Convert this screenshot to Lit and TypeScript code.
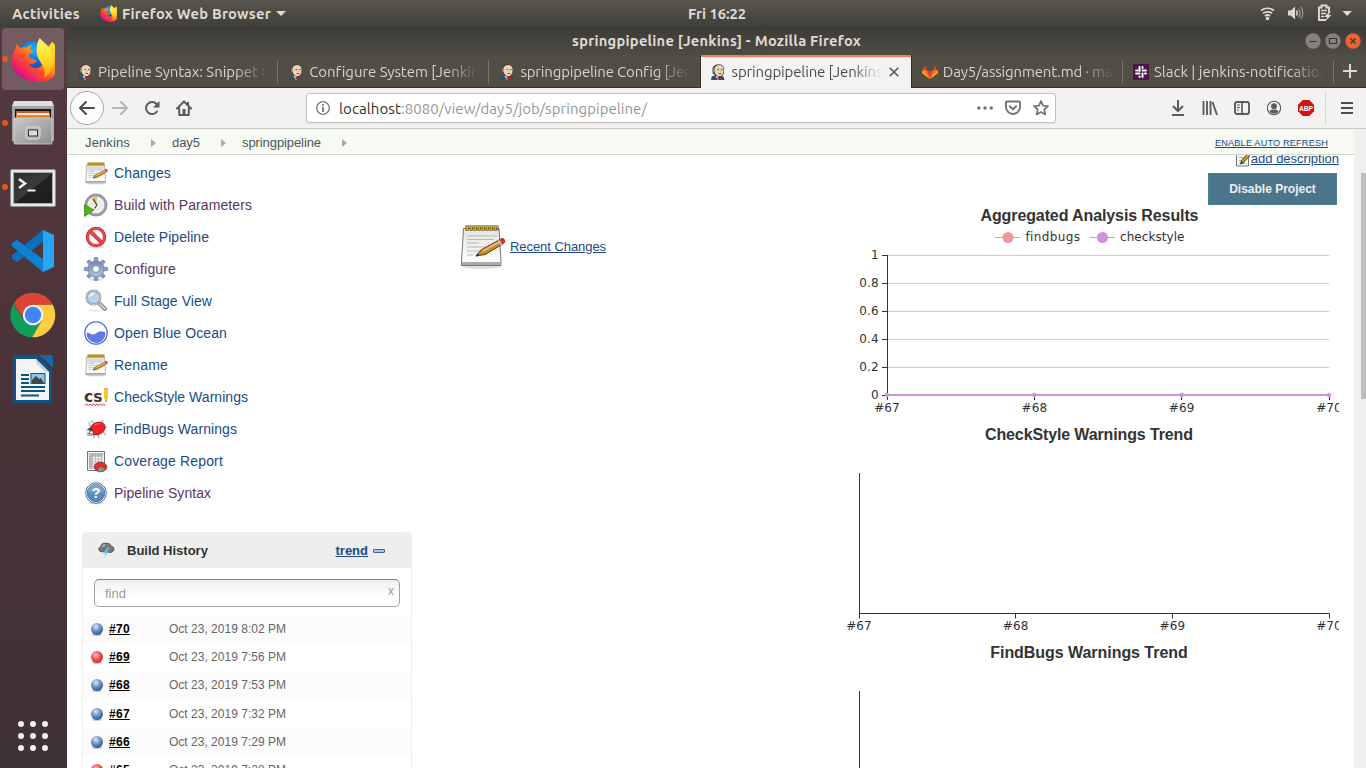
import { LitElement, html, svg, css, nothing } from "lit";
import { customElement, property } from "lit/decorators.js";

/* Sets a line of text to an exact advance width by adjusting its tracking. */
@customElement("fit-text")
class FitText extends LitElement {
  @property() text = "";
  @property({ type: Number }) w = 0;
  static styles = css`
    :host { display: inline-block; white-space: pre; }
    .t { display: inline-block; text-decoration: var(--line, none); }
  `;
  updated() {
    const el = this.renderRoot.querySelector(".t") as HTMLElement;
    el.style.letterSpacing = "0px";
    const natural = el.getBoundingClientRect().width;
    if (this.w) el.style.letterSpacing = (this.w - natural) / this.text.length + "px";
  }
  render() {
    return html`<span class="t">${this.text}</span>`;
  }
}

const firefox = (s: number) => html`<svg width=${s} height=${s} viewBox="0 0 44 46">
  <defs>
    <linearGradient id="fxBody" x1="0.85" y1="0.1" x2="0.1" y2="0.85">
      <stop offset="0" stop-color="#ffe226"/><stop offset=".35" stop-color="#ff9a1a"/>
      <stop offset=".62" stop-color="#ff4a2c"/><stop offset=".85" stop-color="#ee1e6c"/><stop offset="1" stop-color="#b5139c"/>
    </linearGradient>
    <radialGradient id="fxGlobe" cx=".5" cy=".25" r=".8">
      <stop offset="0" stop-color="#18b2f8"/><stop offset=".5" stop-color="#0a6be0"/><stop offset="1" stop-color="#3a1d7c"/>
    </radialGradient>
    <linearGradient id="fxTail" x1="0" y1="0" x2="0" y2="1">
      <stop offset="0" stop-color="#fff36a"/><stop offset=".5" stop-color="#ffdf25"/><stop offset="1" stop-color="#ff9d12"/>
    </linearGradient>
  </defs>
  <circle cx="22" cy="21" r="17.500" fill="url(#fxGlobe)"/>
  <path fill="url(#fxBody)" d="M5 6c1 2 2 3.500 4 4.500c2-1 4-1 6-.5c2-2 4-2.500 6-2.500c-1.500 1.500-2 2.500-2 4.500l3 2.500c0 1.500-3 1.500-4 2c-1 1.500 0 2.500-1 4c1 1 3 .5 5 1.500c2.500 1 3 2 4 1c-1 4-5 4-8 5c3 4 9 5 13 1c5-5 3-9 1-12l10-13c4 4 8 9 8 19c0 13-9 23-22 23C9 45 0 36 0 24C0 18 2 13 4 11z"/>
  <path fill="url(#fxTail)" d="M29 0c4 5 14 10 15 22c0 9-4 16-11 20c3-6 1-9-1-13c-2-4-5-7-6-12c-1-6 0-12 3-17z"/>
</svg>`;

const cabinet = html`<svg width="44" height="46" viewBox="0 0 44 46">
  <defs><linearGradient id="cab" x1="0" y1="0" x2="1" y2="1"><stop offset="0" stop-color="#c9c9c9"/><stop offset="1" stop-color="#8e8e8e"/></linearGradient></defs>
  <path fill="#dedede" d="M3 1h38l2 5v34H1V6z"/><path fill="#a5a5a5" d="M1 6h42v35H1z"/>
  <path fill="#191714" d="M4 9h36v10H4z"/><path fill="#d35820" d="M5 11h33l1 3v4H5z"/><path fill="#fff0df" d="M6 13h32v2H6z"/><path fill="#e7852b" d="M5 15h34v4H5z"/>
  <rect x="3" y="18" width="38" height="26" rx="1" fill="url(#cab)" stroke="#d2d2d2" stroke-width=".8"/>
  <rect x="15" y="27" width="14" height="12" rx="2.500" fill="#b5b5b5" stroke="#dcdcdc"/><rect x="17.500" y="30" width="9" height="6" fill="#ddd" stroke="#333"/>
</svg>`;

const terminal = html`<svg width="46" height="38" viewBox="0 0 46 38">
  <defs><linearGradient id="scr" x1="0" y1="0" x2="1" y2="1"><stop offset="0" stop-color="#2b2b2b"/><stop offset=".5" stop-color="#3c3c3c"/><stop offset=".51" stop-color="#222"/><stop offset="1" stop-color="#1c1c1c"/></linearGradient></defs>
  <rect x=".5" y=".5" width="45" height="37" rx="1.500" fill="#e8e8e8" stroke="#8f8f8f"/><rect x="3.500" y="3.500" width="39" height="31" fill="url(#scr)" stroke="#aaa"/>
  <path d="M9 10l6 4.500-6 4.500" fill="none" stroke="#eee" stroke-width="2.500"/><path d="M17.500 21.500h8" stroke="#eee" stroke-width="2"/>
</svg>`;

const vscode = html`<svg width="42" height="42" viewBox="0 0 42 42">
  <path fill="#0f6cb4" d="M31 0v12L5 32 0 28.500v-3z"/><path fill="#0b7fcb" d="M5 10l26 19v13L0 16v-2.500z"/>
  <path fill="#0a70b8" d="M0 25.500L31 0v11L5 32 0 28.500z"/><path fill="#0e82d0" d="M0 13l5-3 26 20v12L0 16z"/><path fill="#27a5f0" d="M31 0l11 5v32l-11 5z"/>
</svg>`;

const chrome = html`<svg width="46" height="46" viewBox="0 0 46 46">
  <path fill="#109d58" d="M3.500 11.700A22.300 22.300 0 0 0 22.600 45.300L32 27.500 13.500 27.500z"/>
  <path fill="#ffcd40" d="M42.600 12.500H23L32 28 22.300 45.300A22.300 22.300 0 0 0 42.600 12.500z"/>
  <path fill="#dc4437" d="M3.700 11.500A22.300 22.300 0 0 1 42.600 12.800H23a10 10 0 0 0-10 13z"/>
  <circle cx="23" cy="23" r="10.300" fill="#f3f3f3"/><circle cx="23" cy="23" r="8.200" fill="#4286f5"/>
</svg>`;

const writer = html`<svg width="42" height="48" viewBox="0 0 42 48">
  <path fill="#0c5589" d="M2 0h23l15 15v31q0 2-2 2H3q-2 0-2-2V1z"/><path fill="#1569a5" d="M27 0h12q2 0 2 2v11z"/>
  <path fill="#f5f5f5" d="M4 4h20l13 13v28H4z"/><path fill="#c9d3da" d="M24 4v0l13 13h-4L24 8z"/>
  <path stroke="#0c5589" stroke-width="2" d="M9 20h8M9 24h8M9 28h8M9 32h24M9 36h24M9 40.500h18"/>
  <rect x="19" y="18.500" width="14" height="10" fill="#8bc3e9" stroke="#0c5589"/><path fill="#40474b" d="M20 28v-3l4-4 3 3 2-1 3 5z"/>
</svg>`;

const butler = html`<svg width="16" height="16" viewBox="0 0 16 16">
  <path fill="#2d5069" d="M1 16l.8-3.500 3.700-1.500 5 1 3 .5 1 3.500z"/><path fill="#4a3e37" d="M2.500 4.500Q3.500.5 8.500.3q5 .2 5.700 4.200l-.4 5.500-2.300 2.500H6.500L2.500 9z"/>
  <path fill="#ecd3b4" d="M4.700 3.500Q5.700 1 8.800 1q4 0 4.700 3.500l-.3 5-2.300 2.500-2.900.3-2.700-2.500-1-2.500z"/><path fill="#8f8881" d="M3 4.500l1.700-1v4L3.400 9z"/>
  <path stroke="#6b5244" stroke-width="1" d="M7.500 5.500H9M11 5.500h1.500M8.500 9.500h2.700"/><path fill="#d9b592" d="M9.800 6h1v2h-1z"/>
  <path fill="#e8e6e2" d="M5.500 11.500l2.500 1 1 3.500H7.500z"/><path fill="#b8202b" d="M7.500 13l2 .9 2.500-.9v3L9.500 15l-2 1z"/>
</svg>`;
const gitlab = html`<svg width="16" height="16" viewBox="0 0 16 16"><path fill="#e24329" d="M3 1l2 6h6l2-6 3 8-8 6-8-6z"/><path fill="#fc6d26" d="M0 9l1-3h4l3 9zM16 9l-1-3h-4l-3 9z"/><path fill="#fca326" d="M0 9l1-3 7 9zM16 9l-1-3-7 9z"/></svg>`;
const slack = html`<svg width="16" height="16" viewBox="0 0 16 16"><path fill="#4a154b" d="M0 0h16v16H0z"/><path stroke="#fff" stroke-width="2" stroke-linecap="round" d="M6.500 3v4M3 6.500h1.500M9.500 3v1M9.500 6.500H13M9.500 9.500V13M12 9.500h1M3 9.500h3.500M6.500 12.500v.5"/></svg>`;

const notepad = (s: number) => html`<svg width=${s} height=${s} viewBox="0 0 48 48">
  <defs><linearGradient id="paper" x1="0" y1="0" x2="0" y2="1"><stop offset="0" stop-color="#e4e4e2"/><stop offset="1" stop-color="#fff"/></linearGradient></defs>
  <ellipse cx="24" cy="44.500" rx="19" ry="2.500" fill="#0002"/>
  <path fill="url(#paper)" stroke="#777" d="M5.500 6.500h35.500l2 33v4H3.500v-4z"/><path fill="#aaa" d="M4 40h39v3H4z"/>
  <path stroke="#b4b5b5" stroke-width="1.200" d="M9 14h30M9 17.500h27M9 21h12M9 25h24M9 29h17M9 33h6"/>
  <path stroke="#68540b" stroke-width="5.600" stroke-dasharray="3.200 .8" d="M7.500 6h33"/><path stroke="#e2c82e" stroke-width="5" stroke-dasharray="1.300 2.700" d="M8.500 5.800h32"/>
  <path fill="#c88a2c" stroke="#5c3c0c" stroke-width="1" d="M18 34l5-6 18-10 3 4.500-17 10z"/><path fill="#e9c077" d="M24 28.500l16-9 1 1.500-16 9z"/>
  <path fill="#e02e2a" stroke="#8a2020" stroke-width=".7" d="M41 18l3-1.700q3 0 2.800 4L44 22.500z"/><path fill="#bbb" d="M39.500 19l2-1.200 3 4.500-2 1.200z"/><path fill="#222" d="M17.500 34.500l2-3 2 1.500z"/>
</svg>`;

const buildClock = html`<svg width="24" height="24" viewBox="0 0 24 24"><circle cx="12" cy="12" r="9.800" fill="#eef0e6" stroke="#9a9ab0" stroke-width="2.300"/><circle cx="12" cy="12" r="11.100" fill="none" stroke="#6e6e84" stroke-width=".6"/><path fill="#e3bf4a" d="M12 12L8 5.500q3-2.500 5-1.500z"/><path d="M9 6l4 6-2.500 3.500" stroke="#444" stroke-width="1.200" fill="none"/><path stroke="#999" d="M12 3v1M21 12h-1M12 21v-1"/><path fill="#50b518" stroke="#2d7e10" stroke-width=".7" d="M.5 11.500l9.500 5.500-9.500 6.500z"/></svg>`;
const stop = html`<svg width="24" height="24" viewBox="0 0 24 24"><ellipse cx="12" cy="22.200" rx="8" ry="1.300" fill="#0002"/><circle cx="12" cy="12" r="8.300" fill="#fff" stroke="#b92020" stroke-width="3.800"/><circle cx="12" cy="12" r="8.300" fill="#f7f7f7" stroke="#e4484a" stroke-width="2.700"/><path stroke="#b92020" stroke-width="3.700" d="M6.500 6.500l11 11"/><path stroke="#e4484a" stroke-width="2.700" d="M6.200 6.200l11.600 11.600"/></svg>`;
const gear = html`<svg width="24" height="24" viewBox="0 0 24 24"><defs><linearGradient id="gr" x1="0" y1="0" x2="0" y2="1"><stop offset="0" stop-color="#7587b5"/><stop offset="1" stop-color="#b5c0dc"/></linearGradient></defs><ellipse cx="12" cy="22.500" rx="7" ry="1.300" fill="#0002"/>
<g fill="url(#gr)" stroke="#65749b" stroke-width=".6">${[0, 45, 90, 135, 180, 225, 270, 315].map(a => svg`<path d="M9.800 5.500l.7-5h3l.7 5z" transform="rotate(${a} 12 12)"/>`)}<path fill-rule="evenodd" d="M12 4a8 8 0 1 0 0 16a8 8 0 1 0 0-16zM12 8.700a3.300 3.300 0 1 1 0 6.600a3.300 3.300 0 1 1 0-6.600z"/></g></svg>`;
const lens = html`<svg width="24" height="24" viewBox="0 0 24 24"><ellipse cx="12" cy="21.500" rx="9" ry="1.500" fill="#0001"/><path stroke="#858585" stroke-width="4" stroke-linecap="round" d="M16 15l5 5"/><path stroke="#d0d0d0" stroke-width="1.800" stroke-linecap="round" d="M16 15l5 5"/><circle cx="9.500" cy="8.500" r="6.900" fill="#b9d3ef" stroke="#8c8f94" stroke-width="2.200"/><circle cx="9.500" cy="8.500" r="6.900" fill="none" stroke="#dcdcdc"/><path d="M4.500 8q1-4.500 6-4.500q-1 4-6 4.500z" fill="#e6f1fc"/></svg>`;
const ocean = html`<svg width="24" height="24" viewBox="0 0 24 24"><circle cx="12" cy="12" r="11.200" fill="#fff" stroke="#5a75e6" stroke-width="1.300"/><path fill="#6079e6" d="M2.800 11.500q2 .2 3.500 1.300q3 1.500 6-.6q3-2.700 5.500-1.600q2 .6 3.400.4A9.300 9.300 0 1 1 2.800 11.500z"/></svg>`;
const checkstyle = html`<svg width="24" height="24" viewBox="0 0 24 24"><text class="cs" x="0" y="16.500" textLength="18.500" lengthAdjust="spacingAndGlyphs">cs</text><path d="M1 20.500l1.700-1.500 1.700 1.500 1.700-1.500 1.700 1.500 1.700-1.500 1.700 1.500 1.700-1.500 1.700 1.500 1.700-1.500 1.700 1.500 1.700-1.500 1.700 1.500" fill="none" stroke="#e02c22"/><path fill="#ef9ab0" d="M20 3h4v2h-4z"/><path fill="#f4cb1c" d="M20 5h4v8l-2 4-2-4z"/><path fill="#3d3020" d="M21.300 15.500h1.400l-.7 2z"/></svg>`;
const bug = html`<svg width="24" height="24" viewBox="0 0 24 24"><path d="M6 9L5 5M10 6L7 3.500M18 6l1-3M20 11l3-1M19 15l3 3M14 17l1 4M9 17l1 4" stroke="#aaa" stroke-width="1.200"/><ellipse cx="13.500" cy="11.500" rx="8" ry="6" transform="rotate(-25 13.500 11.500)" fill="#f02424" stroke="#801010" stroke-width=".7"/><path fill="#fb5b50" d="M9 9q4-4 8-3q-3 2-8 3z"/><circle cx="6" cy="14" r="3" fill="#444"/><circle cx="4" cy="14.500" r="1.700" fill="#fff" stroke="#777" stroke-width=".4"/><circle cx="7.500" cy="15.500" r="1.600" fill="#fff" stroke="#777" stroke-width=".4"/><path stroke="#444" stroke-width=".8" d="M7 11l3 5M3 18h5"/></svg>`;
const coverage = html`<svg width="24" height="24" viewBox="0 0 24 24"><path fill="#f3f3f3" stroke="#777" d="M3.500 2.500h17v19h-17z"/><path fill="#bbb" d="M5 4h14v3H5zM5 4h3v16H5z"/><path stroke="#aaa" stroke-width=".6" d="M5 7.500h14M5 10h14M5 12.500h14M5 15h14M5 17.500h14M8.500 4v16M11.500 4v16M14.500 4v16M17.500 4v16"/><ellipse cx="16.500" cy="18" rx="6.300" ry="4.800" fill="#d8322c" stroke="#841a18" stroke-width=".7"/><path fill="#699fd0" d="M16.500 17.500l2 4.500q-3 1-5 .2z"/><path fill="#65b446" d="M16.500 17.500l4.500 3q-1 1-2.500 1.500z"/></svg>`;
const help = html`<svg width="24" height="24" viewBox="0 0 24 24"><ellipse cx="12" cy="22" rx="8" ry="1.500" fill="#0002"/><circle cx="12" cy="12" r="10.300" fill="#fff" stroke="#3e6ea6" stroke-width="1"/><circle cx="12" cy="12" r="8.700" fill="#5f89ba" stroke="#3465a4" stroke-width=".8"/><path fill="#8eadd2" d="M4 11a8 8 0 0 1 16 0q-8 2-16 0z" opacity=".7"/><text class="q" x="12" y="17" text-anchor="middle">?</text></svg>`;
const cloud = html`<svg width="18" height="18" viewBox="0 0 18 18"><path fill="#777" stroke="#444" stroke-width=".8" d="M3 10.500a3 3 0 0 1 .5-5Q5 1 9 2.500q4-1 5 2.500q3 .8 3 3t-3 3.500z"/><path fill="#aaa" d="M4 6q2-3.500 5-2.500q-1 3-5 2.500z"/><path fill="#59ccf5" d="M10.500 6.500l-4.500 6h3L6 18l6-7.500H9.500l3.500-4z"/></svg>`;
const ball = (red: boolean) => html`<svg width="14" height="16" viewBox="0 0 14 16"><defs>
  <radialGradient id="bl" cx=".4" cy=".3" r=".7"><stop offset="0" stop-color="#e2eaf0"/><stop offset=".45" stop-color="#7a9fc9"/><stop offset="1" stop-color="#24599c"/></radialGradient>
  <radialGradient id="rd" cx=".4" cy=".35" r=".7"><stop offset="0" stop-color="#ffc4c4"/><stop offset=".5" stop-color="#f25656"/><stop offset="1" stop-color="#e01a1a"/></radialGradient></defs>
  <ellipse cx="7" cy="13.500" rx="5" ry="1.500" fill="#0003"/><circle cx="7" cy="8" r="6" fill=${red ? "url(#rd)" : "url(#bl)"}/></svg>`;

const tabs = [
  { icon: butler, text: "Pipeline Syntax: Snippet G", w: 173 },
  { icon: butler, text: "Configure System [Jenkins", w: 176 },
  { icon: butler, text: "springpipeline Config [Jenk", w: 179 },
  { icon: butler, text: "springpipeline [Jenkins]", w: 155, active: true },
  { icon: gitlab, text: "Day5/assignment.md · mas", w: 176 },
  { icon: slack, text: "Slack | jenkins-notifications", w: 180 },
];

const tasks = [
  [notepad(24), "Changes", 57], [buildClock, "Build with Parameters", 138, 1], [stop, "Delete Pipeline", 95], [gear, "Configure", 62, 1],
  [lens, "Full Stage View", 98], [ocean, "Open Blue Ocean", 113], [notepad(24), "Rename", 54], [checkstyle, "CheckStyle Warnings", 134],
  [bug, "FindBugs Warnings", 123], [coverage, "Coverage Report", 109], [help, "Pipeline Syntax", 97, 1],
] as [unknown, string, number, number?][];

const builds: [string, string, boolean][] = [
  ["#70", "Oct 23, 2019 8:02 PM", false], ["#69", "Oct 23, 2019 7:56 PM", true], ["#68", "Oct 23, 2019 7:53 PM", false],
  ["#67", "Oct 23, 2019 7:32 PM", false], ["#66", "Oct 23, 2019 7:29 PM", false], ["#65", "Oct 23, 2019 7:28 PM", true],
];

@customElement("app-root")
class AppRoot extends LitElement {
  static styles = css`
    :host { display: grid; grid-template-rows: 27px 741px; width: 1366px; height: 768px; overflow: hidden; font-family: "Liberation Sans", Arial, sans-serif; }
    * { box-sizing: border-box; }
    svg { display: block; flex: none; }
    .ui { font-family: Ubuntu, "Noto Sans", sans-serif; }
    .panel { display: grid; grid-template-columns: 676px auto 1fr; align-items: center; padding: 0 14px 0 12px; background: linear-gradient(#5a564d, #3f3e39); color: #dfdbd2; font-size: 14.670px; font-weight: 700; line-height: 27px; }
    .clock { margin-top: -1px; }
    .left, .right { display: flex; align-items: center; }
    .left .fx { margin: 0 5px 0 20px; }
    .left .dn { margin-left: 5px; }
    .right { justify-content: flex-end; }
    .right svg { margin-top: -1px; }
    .below { display: grid; grid-template-columns: 67px 1299px; }
    .dock { background: linear-gradient(#543a40, #4a3338 50%, #3f3236); display: flex; flex-direction: column; padding-top: 1px; height: 741px; }
    .item { height: 64px; display: grid; grid-template-columns: 62px; padding: 0 0 2px 2px; }
    .tile { display: grid; grid-template-columns: 6px 50px; align-items: center; justify-items: center; border-radius: 4px; }
    .tile.low svg { margin-top: 2px; }
    .tile.on { background: #735c61; }
    .run { width: 6px; height: 6px; border-radius: 3px; background: #e95420; }
    .apps { display: grid; grid-template-columns: repeat(3, 6px); gap: 6px; margin: auto 0 17px 18px; }
    .apps i { width: 6px; height: 6px; border-radius: 3px; background: #f1efef; }
    .win { display: flex; flex-direction: column; height: 741px; overflow: hidden; }
    .title { height: 28px; flex: none; display: grid; grid-template-columns: 505px auto 1fr; align-items: center; background: linear-gradient(#3c3b37, #4f4c44); color: #dfdbd2; font-weight: 700; font-size: 14.670px; line-height: 28px; padding-right: 5px; }
    .ctl { display: flex; gap: 4px; justify-content: flex-end; }
    .tabs { height: 33px; flex: none; display: flex; background: #514e46; border-bottom: 1px solid #33312d; }
    .tab { width: 211.200px; height: 32px; display: flex; align-items: center; padding: 1px 0 0 10px; color: #d7d4cc; font-size: 15px; border-right: 1px solid transparent; background: linear-gradient(#77746d, #77746d) 210px 5px / 1px 24px no-repeat; }
    .tab.pre, .tab.active { background: none; }
    .tab.active { height: 33px; background: #f4f3f2; border: solid #33312d; border-width: 0 1px; margin-left: -1px; width: 212.200px; color: #4c4c4c; box-shadow: inset 0 2px #f37f50; padding: 0 0 0 9px; }
    .label { width: 170px; margin-left: 5px; overflow: hidden; line-height: 32px; -webkit-mask-image: linear-gradient(90deg, #000 80%, transparent); mask-image: linear-gradient(90deg, #000 80%, transparent); }
    .active .label { width: 150px; margin-left: 6px; }
    .tab .x { margin-left: 7px; }
    .plus { margin: 9px 0 0 9px; }
    .bar { height: 41px; flex: none; display: flex; align-items: center; background: #f3f2f1; border-bottom: 1px solid #cbc9c7; padding-left: 3px; }
    .back { width: 34px; height: 34px; border: 1px solid #a9a7a4; border-radius: 50%; background: #fcfcfc; display: grid; place-items: center; }
    .nav { display: flex; gap: 16px; margin-left: 8px; }
    .url { width: 750px; height: 30px; margin-left: 114px; background: #fff; border: 1px solid #c3c1be; border-radius: 3px; box-shadow: 0 1px 2px #0001; display: flex; align-items: center; padding: 0 6px 0 8px; font-size: 15px; line-height: 29px; color: #969696; }
    .host { color: #33302e; margin-left: 8px; }
    .acts { display: flex; gap: 12px; margin-left: auto; }
    .tools { display: flex; align-items: center; gap: 16px; margin-left: 114px; }
    .sep { width: 1px; height: 34px; background: #dad8d6; margin: 0 13px 0 11px; }
    .abp { font: 700 7.500px "Liberation Sans", sans-serif; fill: #fff; text-anchor: middle; }
    .page { flex: 1; display: grid; grid-template-columns: 1287px 12px; min-height: 0; }
    .doc { background: #fff; overflow: hidden; display: flex; flex-direction: column; }
    .scroll { background: #f1f0ef; padding: 44px 0 0 7px; }
    .thumb { height: 226px; background: #c1bfbe; }
    .crumbs { height: 26px; flex: none; background: #f6faf2; border-bottom: 1px solid #d3d7cf; display: flex; align-items: center; padding: 2px 26px 0 18px; font-size: 13px; color: #4d545d; }
    .crumbs svg { margin: 0 16px 0 21px; }
    .refresh { margin-left: auto; font-size: 9.200px; color: #204a87; --line: underline; }
    .main { flex: 1; min-height: 0; overflow: hidden; display: grid; grid-template-columns: 345px 427px 500px; }
    .side { padding: 2px 0 0 15px; }
    .task { display: flex; align-items: center; gap: 6px; height: 32px; padding-left: 2px; font-size: 14px; color: #204a87; }
    .task.seen { color: #5c3566; }
    .cs { font: 700 15px "DejaVu Sans", sans-serif; fill: #3a3a3a; }
    .q { font: 700 14px "Liberation Sans", sans-serif; fill: #fff; }
    .hist { width: 330px; height: 300px; margin-top: 23px; border: 1px solid #eee; border-radius: 5px 5px 0 0; }
    .hh { height: 35px; background: #eee; display: flex; align-items: center; padding: 0 26px 1px 14px; font-size: 13px; font-weight: 700; color: #333; }
    .hh .nm { margin-left: 12px; }
    .hh .tr { margin-left: auto; color: #204a87; text-decoration: underline; }
    .dash { width: 12px; height: 4px; border: 1px solid #3a6ba5; background: #a6c5e5; margin: 1px 0 0 5px; border-radius: 1px; }
    .find { margin: 11px 11px 9px; height: 28px; border: 1px solid #a2a2a2; border-top-color: #858585; border-radius: 5px; background: linear-gradient(#f0f0f0, #fff 60%); display: flex; justify-content: space-between; padding: 0 5px 0 10px; line-height: 27px; font-size: 13px; color: #999; }
    .find .c { line-height: 22px; font-size: 12px; }
    .row { height: 28.200px; display: grid; grid-template-columns: 18px 60px 1fr; align-items: center; padding-left: 8px; font-size: 12px; color: #666; line-height: 24px; padding-bottom: 2px; }
    .row:nth-child(odd) { background: #fbfbfb; }
    .row svg { margin: 0 0 0 -1px; }
    .row b { color: #000; text-decoration: underline; letter-spacing: .3px; }
    .mid { display: flex; align-items: center; gap: 4px; height: 48px; margin: 67px 0 0 46px; font-size: 13px; color: #204a87; --line: underline; }
    .charts { display: flex; flex-direction: column; align-items: flex-end; }
    .desc { display: flex; align-items: flex-start; margin-top: -4px; height: 22px; font-size: 13px; line-height: 15px; color: #204a87; gap: 1px; }
    .desc span { text-decoration: underline; }
    .btn { width: 129px; height: 32px; flex: none; margin-right: 2px; background: #4b758b; border: 1px solid #47809a; color: #eee; font-size: 12px; font-weight: 700; line-height: 30px; text-align: center; }
    .chart { overflow: hidden; }
    .ct { font: 700 16px "Liberation Sans", sans-serif; fill: #333; text-anchor: middle; }
    .ax { font: 12px "DejaVu Sans", sans-serif; fill: #333; letter-spacing: .1px; }
    .m { text-anchor: middle; }
    .e { text-anchor: end; }
  `;

  emptyTrend(title: string, w: number) {
    return html`<svg class="chart" width="500" height="218" viewBox="0 424 500 218">
      <text class="ct" x="250" y="440" textLength=${w}>${title}</text>
      <path d="M20.500 473V613.500H490.500M20.500 613.500v5M176.500 613.500v5M333.500 613.500v5M490.500 613.500v5" fill="none" stroke="#333"/>
      ${["#67", "#68", "#69", "#70"].map((t, i) => svg`<text class="ax m" x=${20 + i * 156.67} y="630">${t}</text>`)}
    </svg>`;
  }

  render() {
    return html`
    <div class="panel ui">
      <div class="left"><fit-text text="Activities" w="68"></fit-text><span class="fx">${firefox(17)}</span><fit-text text="Firefox Web Browser" w="149"></fit-text>
        <svg class="dn" width="10" height="5" viewBox="0 0 10 5"><path fill="#dfdbd2" d="M0 0h10L5 5z"/></svg></div>
      <fit-text class="clock" text="Fri 16:22" w="58"></fit-text>
      <div class="right">
        <svg width="92" height="18" viewBox="0 0 92 18" fill="none" stroke="#dfdbd2">
          <path d="M1 6.500q6.500-4.500 13 0M3 9.300q4.500-3 9 0M5 12q2.500-2 5 0" stroke-width="1.700"/><circle cx="7.500" cy="14.500" r="1.800" fill="#dfdbd2" stroke="none"/>
          <path fill="#dfdbd2" stroke="none" d="M28 6.500h3l4-4v13l-4-4h-3z"/><path d="M36.500 6.500q1.500 2.500 0 5" stroke-width="1.500"/><path stroke="#99968e" stroke-width="1.300" d="M38.500 4.500q3 4.500 0 9M41 3q3.500 6 0 12"/>
          <path stroke-width="1.900" d="M66 16h-7v-12.500h2.500v-2h5v2H69v5"/><path stroke-width="1.400" d="M61 6.500h6M61 9.500h5M61 12.500h3"/><path fill="#dfdbd2" stroke="none" d="M69 8l-5 5h3l-1.500 4 6-6h-3l2-3z"/>
          <path fill="#dfdbd2" stroke="none" d="M82.500 7h9.500L87.200 12z"/>
        </svg>
      </div>
    </div>
    <div class="below">
      <div class="dock">
        ${[firefox(44), cabinet, terminal, vscode, chrome, writer].map((ic, i) => html`<div class="item"><div class="tile ${["on low", "", "low"][i] ?? ""}">${i < 3 ? html`<i class="run"></i>` : html`<i></i>`}${ic}</div></div>`)}
        <div class="apps">${Array.from({ length: 9 }, () => html`<i></i>`)}</div>
      </div>
      <div class="win">
        <div class="title ui"><span></span><fit-text class="name" text="springpipeline [Jenkins] - Mozilla Firefox" w="289"></fit-text>
          <div class="ctl">
            ${["M4.500 8.500h7", "M4.500 5.500h7v5h-7z", "M5.500 5.500l5 5M10.500 5.500l-5 5"].map((d, i) => html`<svg width="16" height="16" viewBox="0 0 16 16"><circle cx="8" cy="8" r="7.700" fill=${i == 2 ? "#ee6135" : "#85827b"}/><path fill="none" stroke="#3a3833" stroke-width="1.200" d=${d}/></svg>`)}
          </div></div>
        <div class="tabs ui">
          ${tabs.map((t, i) => html`<div class="tab ${t.active ? "active" : i == 2 ? "pre" : ""}">${t.icon}<div class="label"><fit-text text=${t.text} w=${t.w}></fit-text></div>${t.active ? html`<svg class="x" width="10" height="10" viewBox="0 0 10 10"><path d="M.7.700l8.600 8.600M9.300.700L.7 9.300" stroke="#555" stroke-width="1.600"/></svg>` : nothing}</div>`)}
          <svg class="plus" width="14" height="14" viewBox="0 0 14 14"><path d="M7 0v14M0 7h14" stroke="#dcd9d2" stroke-width="2"/></svg>
        </div>
        <div class="bar ui">
          <div class="back"><svg width="16" height="14" viewBox="0 0 16 14"><path fill="none" stroke="#4a4a4a" stroke-width="2" stroke-linecap="round" stroke-linejoin="round" d="M7 1L1 7l6 6M1 7h14"/></svg></div>
          <div class="nav">
            <svg width="16" height="16" viewBox="0 0 16 16"><path fill="none" stroke="#b5b4b2" stroke-width="2" stroke-linecap="round" stroke-linejoin="round" d="M9 2l6 6-6 6M15 8H1"/></svg>
            <svg width="16" height="16" viewBox="0 0 16 16"><path fill="none" stroke="#5c5c5c" stroke-width="2" stroke-linecap="round" d="M13 11.500A6 6 0 1 1 12.500 4"/><path fill="#5c5c5c" d="M15.500 1v6.500H9z"/></svg>
            <svg width="16" height="16" viewBox="0 0 16 16"><path fill="none" stroke="#5c5c5c" stroke-width="2" stroke-linecap="round" stroke-linejoin="round" d="M1 8.500L8 1.500l7 7M3.200 8v7h9.600V8"/><path fill="#5c5c5c" d="M6.500 9h3v6.500h-3zM11 2h2v4l-2-2z"/></svg>
          </div>
          <div class="url">
            <svg width="16" height="16" viewBox="0 0 16 16"><circle cx="8" cy="8" r="6.300" fill="none" stroke="#777" stroke-width="1.300"/><path stroke="#777" stroke-width="1.800" d="M8 7v5M8 4v1.800"/></svg>
            <fit-text class="host" text="localhost" w="62"></fit-text><fit-text text=":8080/view/day5/job/springpipeline/" w="246"></fit-text>
            <div class="acts">
              <svg width="16" height="16" viewBox="0 0 16 16" fill="#737373"><circle cx="1.800" cy="8" r="1.800"/><circle cx="8" cy="8" r="1.800"/><circle cx="14.200" cy="8" r="1.800"/></svg>
              <svg width="16" height="16" viewBox="0 0 16 16" fill="none" stroke="#737373" stroke-width="1.900" stroke-linejoin="round" stroke-linecap="round"><path d="M2 1.500h12q1 0 1 1V7a7 7 0 0 1-14 0V2.500q0-1 1-1z"/><path d="M4.800 6.200L8 9.300l3.200-3.100"/></svg>
              <svg width="16" height="16" viewBox="0 0 16 16"><path fill="none" stroke="#737373" stroke-width="1.700" stroke-linejoin="round" d="M8 1l2 4.600 5 .5-3.700 3.400 1 5L8 12l-4.300 2.500 1-5L1 6.100l5-.5z"/></svg>
            </div>
          </div>
          <div class="tools">
            <svg width="16" height="16" viewBox="0 0 16 16" fill="none" stroke="#5c5c5c" stroke-width="2"><path d="M8 0v10M3 6l5 5 5-5M2 15h12"/></svg>
            <svg width="16" height="16" viewBox="0 0 16 16" fill="none" stroke="#5c5c5c"><path d="M1.500 1v14M5 1v14M8.500 1v14M10.500 2l4.500 13" stroke-width="1.900"/></svg>
            <svg width="16" height="16" viewBox="0 0 16 16" fill="none" stroke="#5c5c5c"><rect x="1" y="2" width="14" height="12" rx="2" stroke-width="1.900"/><path d="M8 2v12" stroke-width="1.700"/><path d="M3 5h3M3 7.500h3M3 10h2"/></svg>
            <svg width="16" height="16" viewBox="0 0 16 16"><circle cx="8" cy="8" r="6.700" fill="none" stroke="#5c5c5c" stroke-width="1.100"/><circle cx="8" cy="6.200" r="2.900" fill="#5c5c5c"/><path fill="#5c5c5c" d="M3.500 11q2-2 4.500-1.500q3-.5 4.500 1.500a5 5 0 0 1-9 0z"/></svg>
            <svg width="16" height="16" viewBox="0 0 16 16"><path fill="#cb1414" d="M4.700 0h6.600L16 4.700v6.600L11.300 16H4.700L0 11.300V4.700z"/><text class="abp" x="8" y="10.800" textLength="14" lengthAdjust="spacingAndGlyphs">ABP</text></svg>
          </div>
          <div class="sep"></div>
          <svg width="16" height="16" viewBox="0 0 16 16"><path d="M2 3h12M2 8h12M2 13h12" stroke="#4d4d4d" stroke-width="2"/></svg>
        </div>
        <div class="page">
          <div class="doc">
            <div class="crumbs">
              ${([["Jenkins", 45], ["day5", 28], ["springpipeline", 79]] as [string, number][]).map(([t, w]) => html`<fit-text text=${t} w=${w}></fit-text><svg width="5" height="8" viewBox="0 0 5 8"><path fill="#aaa" d="M0 0l5 4-5 4z"/></svg>`)}
              <fit-text class="refresh" text="ENABLE AUTO REFRESH" w="113"></fit-text>
            </div>
            <div class="main">
              <div class="side">
                ${tasks.map(([ic, t, w, seen]) => html`<div class="task ${seen ? "seen" : ""}">${ic}<fit-text text=${t} w=${w}></fit-text></div>`)}
                <div class="hist">
                  <div class="hh">${cloud}<span class="nm">Build History</span><span class="tr">trend</span><i class="dash"></i></div>
                  <div class="find"><span>find</span><span class="c">x</span></div>
                  <div>${builds.map(([n, d, red]) => html`<div class="row">${ball(red)}<b>${n}</b><fit-text text=${d} w="117"></fit-text></div>`)}</div>
                </div>
              </div>
              <div class="mid">${notepad(48)}<fit-text text="Recent Changes" w="96"></fit-text></div>
              <div class="charts">
                <div class="desc"><svg width="14" height="16" viewBox="0 0 14 16"><path fill="#f4f3ea" stroke="#777" d="M.5 2.500h12v12.500H.5z"/><path stroke="#bbb" d="M3 6.500h6M3 9.500h3M3 12.500h7"/><path stroke="#5c4210" stroke-width="3.500" d="M13.500 3L6 11"/><path stroke="#e0ad38" stroke-width="1.800" d="M13.500 3L6 11"/><path fill="#222" d="M4 13.500l1-3.500 2.500 2z"/></svg><span>add description</span></div>
                <div class="btn">Disable Project</div>
                <svg class="chart" width="500" height="219" viewBox="0 205 500 219">
                  <text class="ct" x="250.500" y="221" textLength="218">Aggregated Analysis Results</text>
                  <path stroke="#ef9a9a" d="M156 237.500h25"/><circle cx="169" cy="237.500" r="5.600" fill="#ef9a9a"/><text class="ax" x="186.500" y="241" textLength="54.500">findbugs</text>
                  <path stroke="#ce93d8" d="M251 237.500h25"/><circle cx="263.500" cy="237.500" r="5.600" fill="#ce93d8"/><text class="ax" x="281" y="241" textLength="64.500">checkstyle</text>
                  ${["1", "0.8", "0.6", "0.4", "0.2", "0"].map((t, i) => svg`<path stroke="#ccc" d="M48 ${255.5 + i * 28}H490"/><path stroke="#333" d="M43 ${255.5 + i * 28}h5"/><text class="ax e" x="39.700" y=${258.5 + i * 28}>${t}</text>`)}
                  <path stroke="#333" d="M48.500 255v145M195.500 395v5M342.500 395v5M490.500 395v5"/>
                  <path stroke="#ce93d8" stroke-width="2" d="M48 395h442"/>
                  ${["#67", "#68", "#69", "#70"].map((t, i) => svg`<circle cx=${48 + i * 147.33} cy="395" r="2.200" fill="#ce93d8"/><text class="ax m" x=${48 + i * 147.33} y="412">${t}</text>`)}
                </svg>
                ${this.emptyTrend("CheckStyle Warnings Trend", 208)}
                ${this.emptyTrend("FindBugs Warnings Trend", 197.5)}
              </div>
            </div>
          </div>
          <div class="scroll"><div class="thumb"></div></div>
        </div>
      </div>
    </div>`;
  }
}
